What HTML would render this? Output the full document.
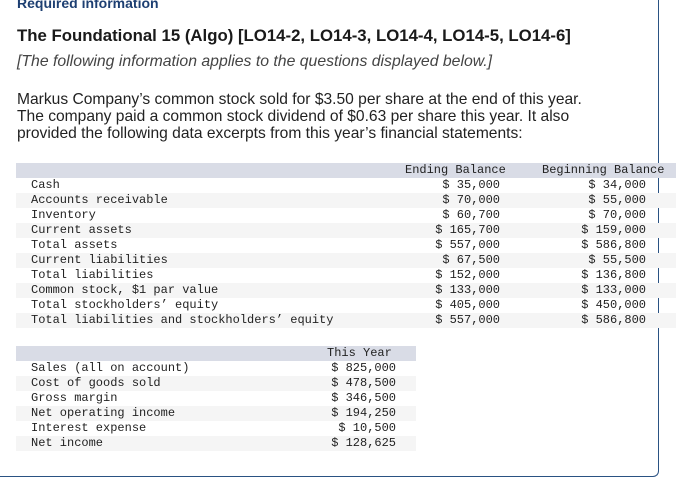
<!DOCTYPE html>
<html><head><style>
html,body{margin:0;padding:0;background:#fff;width:687px;height:481px;overflow:hidden;position:relative}
.t{position:absolute;font-family:"Liberation Sans",sans-serif;color:#222;white-space:nowrap}
.box{position:absolute;left:-10px;top:-20px;width:668px;height:496px;border-right:1.5px solid #2a5283;border-bottom:1.5px solid #2a5283;border-bottom-right-radius:6px}
.row{position:absolute;height:15px;font-family:"Liberation Mono",monospace;font-size:12px;line-height:15px;color:#222;white-space:nowrap}
.row span{position:absolute;top:0}
.h{background:#d9dce6}
.g{background:#f5f5f5}
.w{background:transparent}
.r{text-align:right}
</style></head><body>
<div class="box"></div>
<div class="t" style="left:17px;top:-5px;font-size:14px;font-weight:bold;color:#1d3f72">Required information</div>
<div class="t" style="left:17px;top:26px;font-size:16.8px;font-weight:bold;color:#1a1a1a">The Foundational 15 (Algo) [LO14-2, LO14-3, LO14-4, LO14-5, LO14-6]</div>
<div class="t" style="left:17px;top:53px;font-size:15.8px;font-style:italic;color:#444">[The following information applies to the questions displayed below.]</div>
<div class="t" style="left:17px;top:91px;font-size:15.6px;line-height:17px">Markus Company’s common stock sold for $3.50 per share at the end of this year.<br>The company paid a common stock dividend of $0.63 per share this year. It also<br>provided the following data excerpts from this year’s financial statements:</div>

<div class="row h" style="left:16px;top:163px;width:660px"><span style="left:389px">Ending Balance</span><span style="left:526px">Beginning Balance</span></div>
<div class="row w" style="left:16px;top:178px;width:660px"><span style="left:15px">Cash</span><span class="r" style="right:176px">$ 35,000</span><span class="r" style="right:30px">$ 34,000</span></div>
<div class="row g" style="left:16px;top:193px;width:660px"><span style="left:15px">Accounts receivable</span><span class="r" style="right:176px">$ 70,000</span><span class="r" style="right:30px">$ 55,000</span></div>
<div class="row w" style="left:16px;top:208px;width:660px"><span style="left:15px">Inventory</span><span class="r" style="right:176px">$ 60,700</span><span class="r" style="right:30px">$ 70,000</span></div>
<div class="row g" style="left:16px;top:223px;width:660px"><span style="left:15px">Current assets</span><span class="r" style="right:176px">$ 165,700</span><span class="r" style="right:30px">$ 159,000</span></div>
<div class="row w" style="left:16px;top:238px;width:660px"><span style="left:15px">Total assets</span><span class="r" style="right:176px">$ 557,000</span><span class="r" style="right:30px">$ 586,800</span></div>
<div class="row g" style="left:16px;top:253px;width:660px"><span style="left:15px">Current liabilities</span><span class="r" style="right:176px">$ 67,500</span><span class="r" style="right:30px">$ 55,500</span></div>
<div class="row w" style="left:16px;top:268px;width:660px"><span style="left:15px">Total liabilities</span><span class="r" style="right:176px">$ 152,000</span><span class="r" style="right:30px">$ 136,800</span></div>
<div class="row g" style="left:16px;top:283px;width:660px"><span style="left:15px">Common stock, $1 par value</span><span class="r" style="right:176px">$ 133,000</span><span class="r" style="right:30px">$ 133,000</span></div>
<div class="row w" style="left:16px;top:298px;width:660px"><span style="left:15px">Total stockholders’ equity</span><span class="r" style="right:176px">$ 405,000</span><span class="r" style="right:30px">$ 450,000</span></div>
<div class="row g" style="left:16px;top:313px;width:660px"><span style="left:15px">Total liabilities and stockholders’ equity</span><span class="r" style="right:176px">$ 557,000</span><span class="r" style="right:30px">$ 586,800</span></div>

<div class="row h" style="left:16px;top:346px;width:400px"><span style="left:311px">This Year</span></div>
<div class="row w" style="left:16px;top:361px;width:400px"><span style="left:15px">Sales (all on account)</span><span class="r" style="right:20px">$ 825,000</span></div>
<div class="row g" style="left:16px;top:376px;width:400px"><span style="left:15px">Cost of goods sold</span><span class="r" style="right:20px">$ 478,500</span></div>
<div class="row w" style="left:16px;top:391px;width:400px"><span style="left:15px">Gross margin</span><span class="r" style="right:20px">$ 346,500</span></div>
<div class="row g" style="left:16px;top:406px;width:400px"><span style="left:15px">Net operating income</span><span class="r" style="right:20px">$ 194,250</span></div>
<div class="row w" style="left:16px;top:421px;width:400px"><span style="left:15px">Interest expense</span><span class="r" style="right:20px">$ 10,500</span></div>
<div class="row g" style="left:16px;top:436px;width:400px"><span style="left:15px">Net income</span><span class="r" style="right:20px">$ 128,625</span></div>
</body></html>
